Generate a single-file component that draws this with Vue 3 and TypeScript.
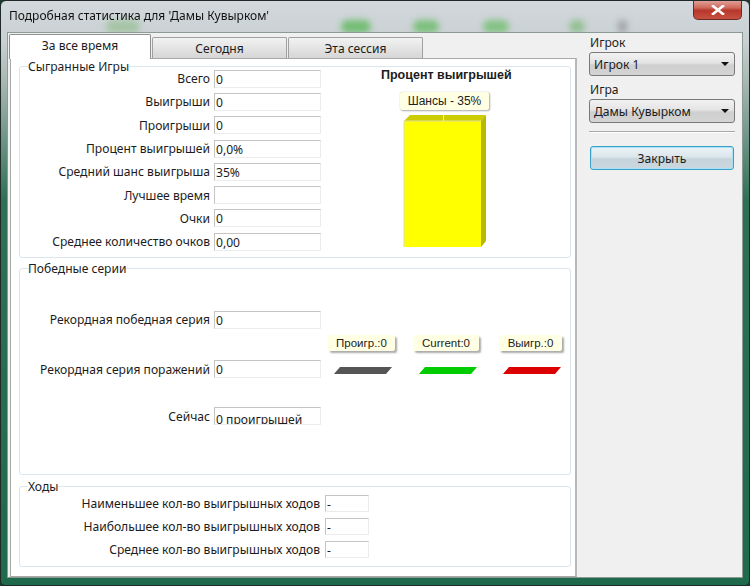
<script setup lang="ts">
interface Row { label: string; value: string }
const played: Row[] = [
  { label: 'Всего', value: '0' },
  { label: 'Выигрыши', value: '0' },
  { label: 'Проигрыши', value: '0' },
  { label: 'Процент выигрышей', value: '0,0%' },
  { label: 'Средний шанс выигрыша', value: '35%' },
  { label: 'Лучшее время', value: '' },
  { label: 'Очки', value: '0' },
  { label: 'Среднее количество очков', value: '0,00' },
]
const moves: Row[] = [
  { label: 'Наименьшее кол-во выигрышных ходов', value: '-' },
  { label: 'Наибольшее кол-во выигрышных ходов', value: '-' },
  { label: 'Среднее кол-во выигрышных ходов', value: '-' },
]
const legend = [
  { text: 'Проигр.:0', color: '#555555', width: 67 },
  { text: 'Current:0', color: '#00cc00', width: 66 },
  { text: 'Выигр.:0', color: '#dd0000', width: 63 },
]
const blobs = [
  { x: 105, w: 34, c: '#a5c4a5' },
  { x: 340, w: 30, c: '#74bd74' },
  { x: 412, w: 26, c: '#7cc07c' },
  { x: 482, w: 26, c: '#84c284' },
  { x: 568, w: 16, c: '#92c092' },
  { x: 617, w: 9, c: '#a0a3a4' },
]
</script>

<template>
  <div class="window">
    <span v-for="b in blobs" :key="b.x" class="blob" :style="{ left: b.x + 'px', width: b.w + 'px', background: b.c }"></span>
    <header class="titlebar">
      <span class="title">Подробная статистика для 'Дамы Кувырком'</span>
      <button class="close" type="button">
        <svg width="14" height="10" viewBox="0 0 14 10">
          <path d="M2 1 L12 9 M12 1 L2 9" stroke="#fff" stroke-width="2.6" stroke-linecap="square" fill="none" />
        </svg>
      </button>
    </header>
    <main class="client">
      <section class="left">
        <nav class="tabs">
          <div class="tab active">За все время</div>
          <div class="tab t2">Сегодня</div>
          <div class="tab t3">Эта сессия</div>
        </nav>
        <div class="panel">
          <fieldset class="group g1">
            <legend>Сыгранные Игры</legend>
            <div class="stats">
              <div v-for="r in played" :key="r.label" class="row">
                <span class="lab">{{ r.label }}</span>
                <span class="val">{{ r.value }}</span>
              </div>
            </div>
            <div class="chart">
              <div class="chart-title">Процент выигрышей</div>
              <div class="tip chance">Шансы - 35%</div>
              <svg class="bar" width="84" height="134" viewBox="0 0 84 134">
                <polygon points="1,7 7,1 83,1 78,7" fill="#cccc00" />
                <polygon points="78,7 83,1 83,127 78,133" fill="#b8b800" />
                <rect x="1" y="7" width="77" height="126" fill="#ffff00" />
                <path d="M1 133 V7 H78" stroke="#e0e0a0" fill="none" />
                <rect x="40" y="1" width="1" height="6" fill="#f2f2b0" />
              </svg>
            </div>
          </fieldset>
          <fieldset class="group g2">
            <legend>Победные серии</legend>
            <div class="streaks">
              <div class="row s1">
                <span class="lab">Рекордная победная серия</span>
                <span class="val">0</span>
              </div>
              <div class="row s2">
                <span class="lab">Рекордная серия поражений</span>
                <span class="val">0</span>
              </div>
              <div class="row s3">
                <span class="lab">Сейчас</span>
                <span class="val clip">0 проигрышей</span>
              </div>
            </div>
            <div class="legend">
              <div v-for="l in legend" :key="l.text" class="leg" :style="{ width: l.width + 'px' }">
                <div class="tip">{{ l.text }}</div>
                <svg class="skew" width="58" height="7" viewBox="0 0 58 7">
                  <polygon points="6,0 58,0 52,7 0,7" :fill="l.color" />
                </svg>
              </div>
            </div>
          </fieldset>
          <fieldset class="group g3">
            <legend>Ходы</legend>
            <div v-for="r in moves" :key="r.label" class="row mv">
              <span class="lab">{{ r.label }}</span>
              <span class="val small">{{ r.value }}</span>
            </div>
          </fieldset>
        </div>
      </section>
      <aside class="side">
        <label class="cap">Игрок</label>
        <div class="combo"><span>Игрок 1</span><i class="arrow"></i></div>
        <label class="cap c2">Игра</label>
        <div class="combo"><span>Дамы Кувырком</span><i class="arrow"></i></div>
        <hr class="sep" />
        <button class="btn" type="button">Закрыть</button>
      </aside>
    </main>
  </div>
</template>

<style>
html, body { margin: 0; background: #1c3a30; }
</style>

<style scoped>
.window {
  position: relative;
  box-sizing: border-box;
  width: 750px;
  height: 586px;
  overflow: hidden;
  display: flex;
  flex-direction: column;
  border: 1px solid #1f2a28;
  border-radius: 6px 6px 5px 5px;
  background: linear-gradient(180deg, #d2d8dc 0, #c9d0d2 40px, #a9b8b2 80px, #2f6f55 200px, #1f6a4d 100%);
  font-family: "Noto Sans", "Open Sans", sans-serif;
  color: #1c1c1c;
  font-size: 12.1px;
  filter: blur(0.35px);
}
.blob {
  position: absolute;
  top: 19px;
  height: 13px;
  border-radius: 7px;
  filter: blur(3px);
}
.titlebar {
  position: relative;
  height: 31px;
  flex: none;
  display: flex;
  align-items: flex-start;
  justify-content: space-between;
  padding-left: 8px;
  padding-right: 7px;
}
.title {
  margin-top: 6px;
  font-size: 12px;
  line-height: 18px;
  color: #111;
}
.close {
  width: 49px;
  height: 20px;
  margin-top: -1px;
  padding: 0;
  border: 1px solid #6d2a25;
  border-top: none;
  border-radius: 0 0 5px 5px;
  background: linear-gradient(180deg, #e2a79f 0, #d06a5d 40%, #b7382c 55%, #c6503f 100%);
  display: flex;
  align-items: center;
  justify-content: center;
}
.client {
  position: relative;
  flex: 1;
  margin: 0 6px 7px 6px;
  display: flex;
  background: #f0f0f0;
  border: 1px solid #8b9a96;
  padding-left: 2px;
  min-height: 0;
}
.left {
  width: 567px;
  flex: none;
  display: flex;
  flex-direction: column;
}
.tabs {
  display: flex;
  height: 25px;
  flex: none;
  align-items: flex-end;
  position: relative;
  z-index: 1;
  margin-left: -1px;
}
.tab {
  box-sizing: border-box;
  text-align: center;
  border: 1px solid #a0a0a0;
  border-bottom: none;
  border-radius: 2px 2px 0 0;
  height: 21px;
  line-height: 21px;
  background: linear-gradient(180deg, #f2f2f2, #d6d6d6);
  margin-right: 1px;
}
.tab.active {
  width: 142px;
  height: 25px;
  line-height: 22px;
  background: #fff;
  margin-bottom: -1px;
  border-color: #909090;
}
.t2 { width: 135px; }
.t3 { width: 135px; }
.panel {
  flex: 1;
  box-sizing: border-box;
  background: #fff;
  border: 1px solid #a8a8a8;
  border-right: 2px solid #b8b8b8;
  padding: 7px 4px 6px 8px;
  display: flex;
  flex-direction: column;
}
.group {
  position: relative;
  box-sizing: border-box;
  margin: 0;
  padding: 0;
  min-width: 0;
  border: 1px solid #dbe5ee;
  border-radius: 3px;
}
.group legend {
  position: relative;
  top: 1px;
  margin-left: 8px;
  padding: 0;
  line-height: 0;
  height: 1px;
  color: #1c1c1c;
}
.g1 { height: 192px; display: flex; margin-bottom: 10px; }
.g2 { height: 207px; display: flex; margin-bottom: 11px; }
.g3 { height: 81px; padding-top: 5px; }
.stats { width: 302px; flex: none; padding-top: 0; }
.row {
  display: flex;
  align-items: center;
  height: 23.3px;
}
.lab {
  width: 190px;
  flex: none;
  text-align: right;
  white-space: nowrap;
  display: flex;
  justify-content: flex-end;
}
.val {
  box-sizing: border-box;
  flex: none;
  margin-left: 4px;
  width: 107px;
  height: 18px;
  line-height: 18px;
  padding-left: 1px;
  background: #fff;
  border-top: 1px solid #c4c4c4;
  border-left: 1px solid #c4c4c4;
  border-right: 1px solid #ececec;
  border-bottom: 1px solid #ececec;
  overflow: hidden;
  white-space: nowrap;
}
.val.clip { line-height: 23px; }
.chart {
  flex: 1;
  display: flex;
  flex-direction: column;
  align-items: flex-start;
  padding-left: 59px;
}
.chart-title {
  font-family: "Liberation Sans", Arial, sans-serif;
  font-weight: 700;
  font-size: 12.5px;
  line-height: 14px;
  margin-top: 1px;
  white-space: nowrap;
}
.tip {
  box-sizing: border-box;
  font-family: "Liberation Sans", Arial, sans-serif;
  font-size: 11.5px;
  background: #ffffe4;
  border-radius: 2px;
  box-shadow: 2px 2px 2px #aaa;
  text-align: center;
  white-space: nowrap;
  color: #222;
}
.chance {
  width: 89px;
  height: 18px;
  line-height: 18px;
  margin-left: 19px;
  margin-top: 10px;
  font-size: 12px;
  box-shadow: 1px 1px 2px #aaa, 0 0 1px #bbb;
  position: relative;
  z-index: 1;
}
.bar { margin-left: 22px; margin-top: 4px; display: block; }
.streaks { width: 302px; flex: none; padding-top: 39px; }
.s1 { margin-bottom: 26.5px; }
.s2 { margin-bottom: 23.5px; }
.legend {
  display: flex;
  align-items: flex-start;
  padding-top: 66px;
  padding-left: 6px;
}
.leg { display: flex; flex-direction: column; margin-right: 18px; }
.leg:nth-child(2) { margin-right: 20px; }
.leg .tip { height: 16px; line-height: 16px; }
.skew { display: block; margin-top: 16px; margin-left: 6px; }
.leg:nth-child(3) .skew { margin-left: 4px; }
.mv .lab { width: 300px; }
.mv { height: 23.2px; }
.val.small { width: 44px; margin-left: 5px; height: 17px; line-height: 17px; }
.side {
  flex: 1;
  display: flex;
  flex-direction: column;
  padding-left: 12px;
  padding-right: 7px;
  padding-top: 1px;
}
.cap { line-height: 17px; height: 17px; margin-left: 1px; }
.c2 { margin-top: 5px; }
.combo {
  box-sizing: border-box;
  height: 24px;
  margin-top: 1px;
  border: 1px solid #7a7a7a;
  border-radius: 3px;
  background: linear-gradient(180deg, #f2f2f2 0, #e4e4e4 45%, #cfcfcf 55%, #d4d4d4 100%);
  display: flex;
  align-items: center;
  justify-content: space-between;
  padding: 0 5px 0 4px;
}
.arrow {
  width: 0;
  height: 0;
  border-left: 4px solid transparent;
  border-right: 4px solid transparent;
  border-top: 4px solid #111;
}
.sep {
  width: 100%;
  box-sizing: border-box;
  margin: 8px 0 13px;
  border: none;
  border-top: 1px solid #a8a8a8;
  border-bottom: 1px solid #fff;
  height: 0;
}
.btn {
  box-sizing: border-box;
  height: 24px;
  width: 144px;
  margin-left: 1px;
  padding: 0;
  border: 1px solid #3c9fc9;
  border-radius: 3px;
  box-shadow: inset 0 0 0 1px #a8e0f4;
  background: linear-gradient(180deg, #eaf3f7 0, #dbe6ec 45%, #c6d3da 55%, #ccd8df 100%);
  font-family: inherit;
  font-size: 12.1px;
  color: #1c1c1c;
}
</style>
